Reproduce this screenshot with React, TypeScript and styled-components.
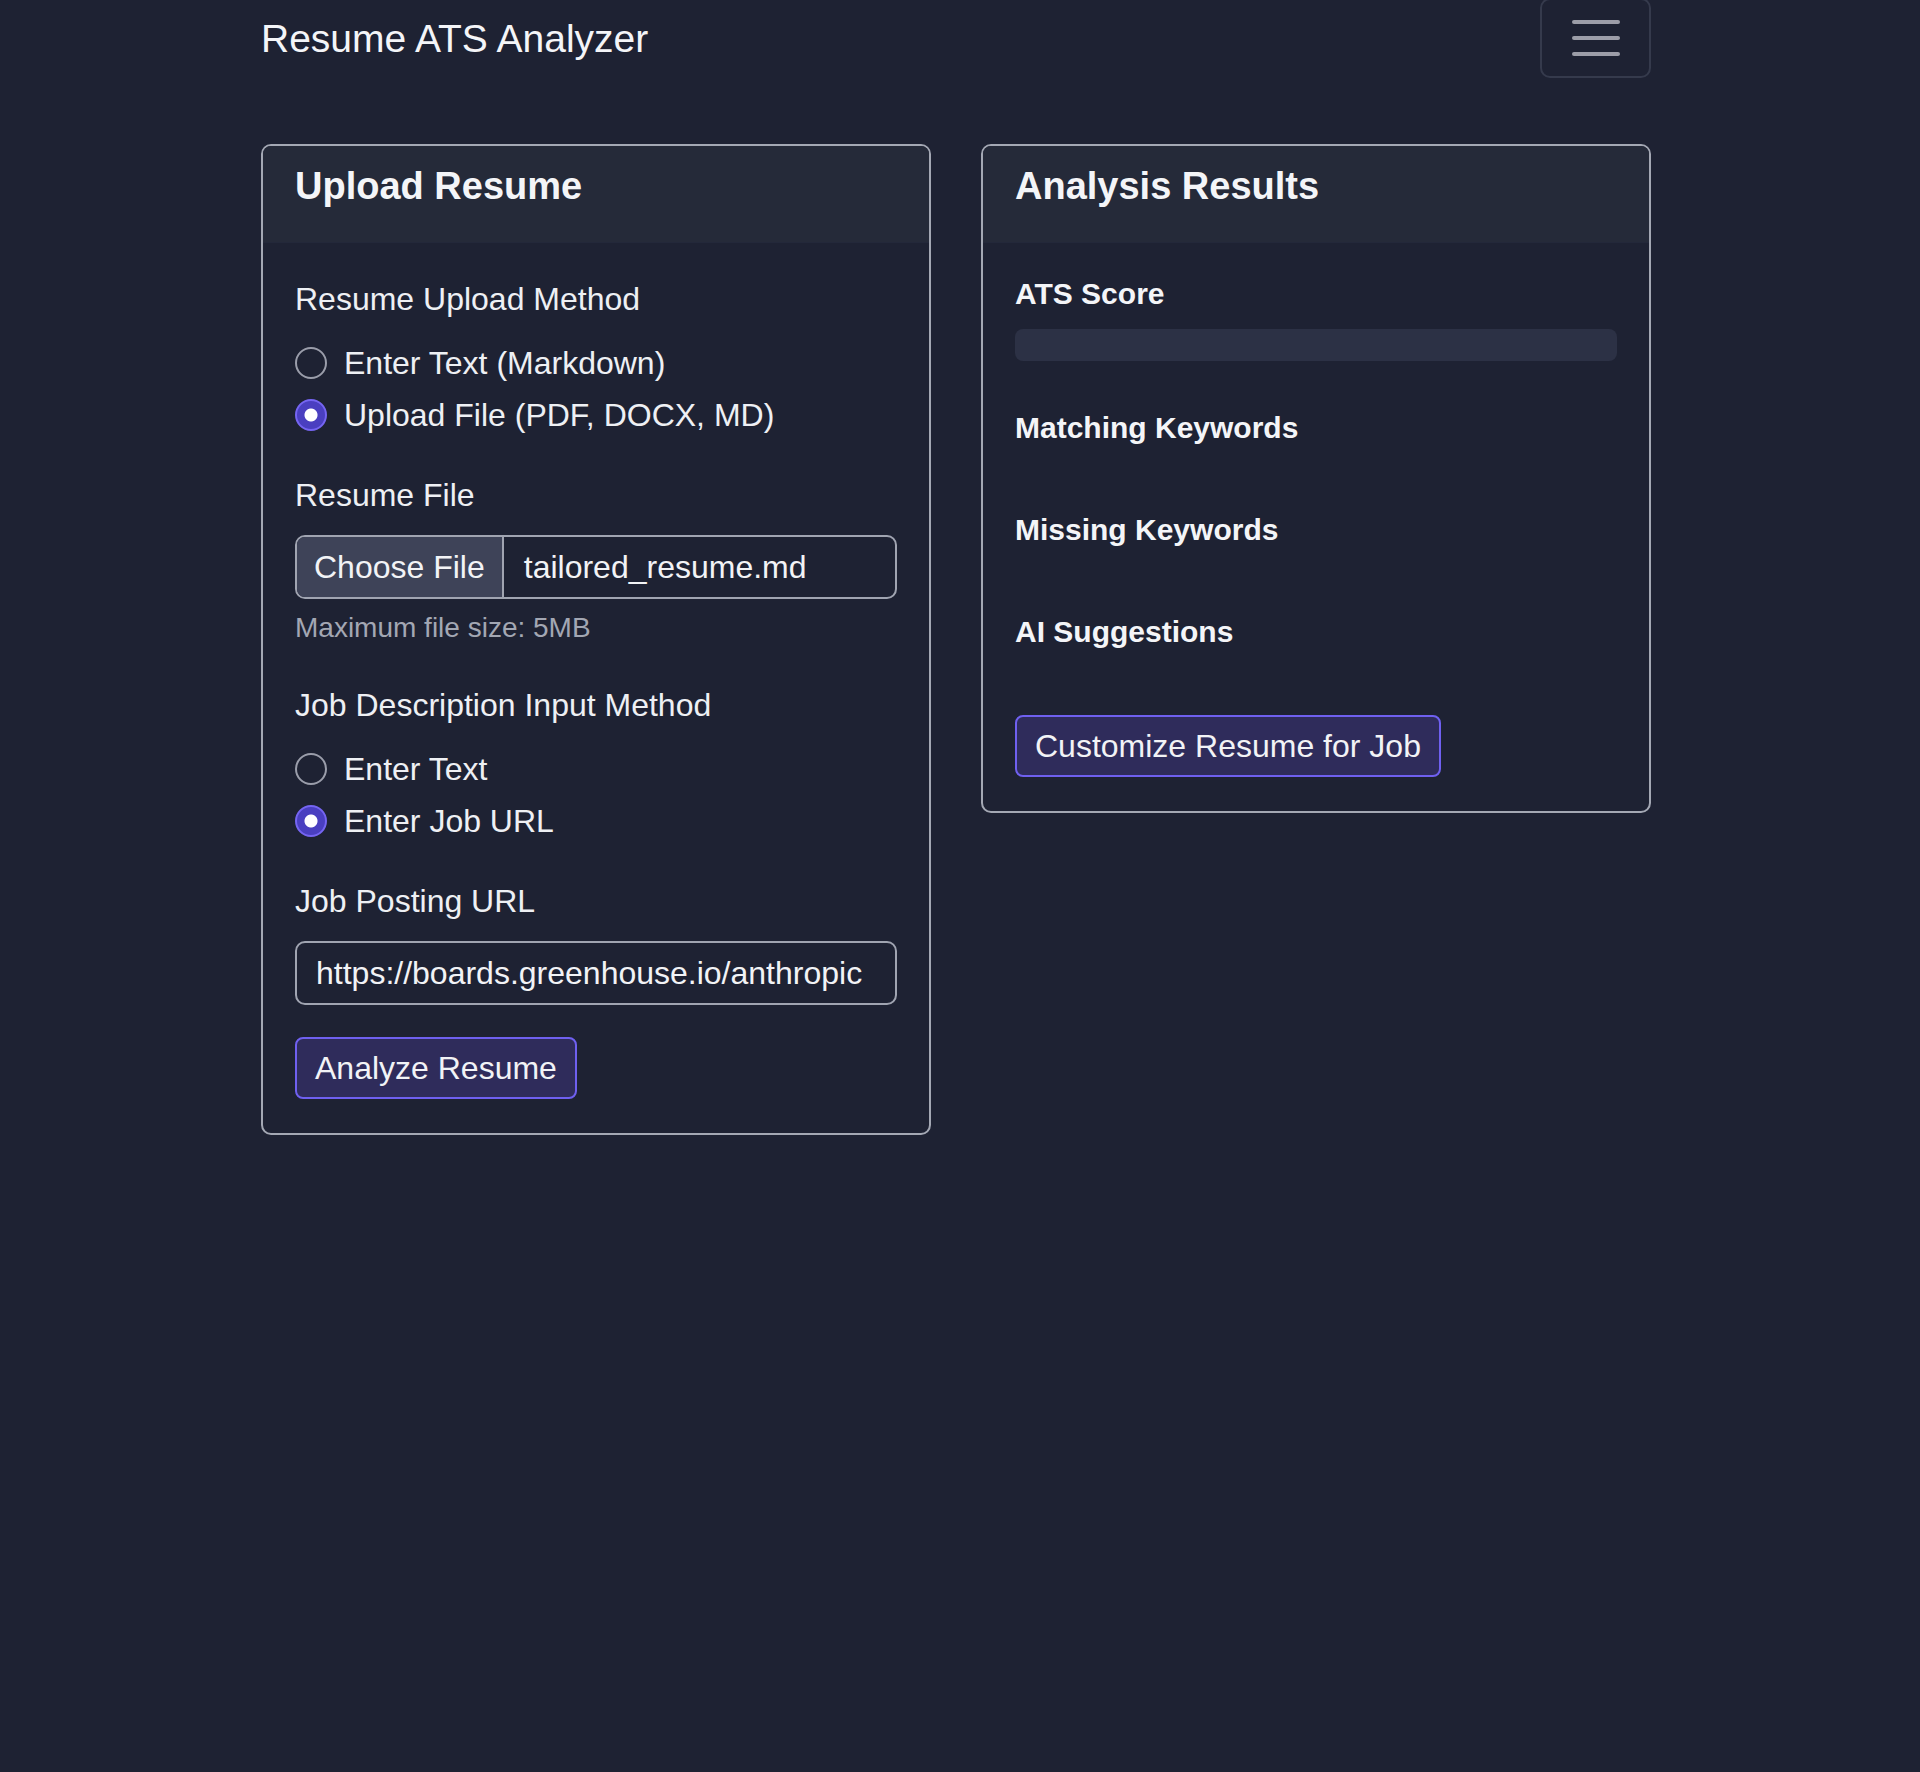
import styled, { createGlobalStyle } from "styled-components";

const GlobalStyle = createGlobalStyle`
  html, body {
    margin: 0;
    padding: 0;
    background: #1e2233;
  }
  body {
    min-height: 1772px;
    padding-right: 8px;
    font-family: "Liberation Sans", Arial, sans-serif;
    color: #eef0f4;
  }
`;

const Container = styled.div`
  width: 1390px;
  margin: 0 auto;
`;

const NavBar = styled.nav`
  display: flex;
  align-items: center;
  justify-content: space-between;
  height: 80px;
  margin-top: -2px;
`;

const Brand = styled.a`
  font-size: 39px;
  line-height: 48px;
  color: #f4f5f8;
  text-decoration: none;
  margin-top: 2px;
`;

const Toggler = styled.button`
  width: 111px;
  height: 80px;
  background: transparent;
  border: 2px solid #353a4c;
  border-radius: 10px;
  display: flex;
  flex-direction: column;
  align-items: center;
  justify-content: center;
  gap: 12px;
  padding: 0;

  span {
    display: block;
    width: 48px;
    height: 4px;
    border-radius: 2px;
    background: #9c9da8;
  }
`;

const Grid = styled.main`
  display: grid;
  grid-template-columns: 670px 670px;
  column-gap: 50px;
  align-items: start;
  margin-top: 66px;
`;

const Card = styled.section`
  border: 2px solid #a4a8b4;
  border-radius: 10px;
  overflow: hidden;
`;

const CardHeader = styled.header`
  background: #252a39;
  padding: 17px 32px 32px;
  border-bottom: 1px solid #23283a;

  h2 {
    margin: 0;
    font-size: 38px;
    line-height: 47px;
    font-weight: 700;
    color: #f4f5f8;
  }
`;

const CardBody = styled.div`
  padding: 32px 32px 34px;
`;

const Group = styled.div`
  margin-bottom: 32px;
`;

const Label = styled.div`
  font-size: 32px;
  line-height: 48px;
  margin-bottom: 16px;
  color: #eef0f4;
`;

const RadioList = styled.div`
  display: flex;
  flex-direction: column;
  gap: 4px;
`;

const RadioRow = styled.label`
  display: flex;
  align-items: center;
  gap: 17px;
  height: 48px;
  font-size: 32px;
  color: #eef0f4;
  white-space: nowrap;
`;

const RadioDot = styled.input`
  appearance: none;
  margin: 0;
  width: 32px;
  height: 32px;
  border-radius: 50%;
  border: 2px solid #9a9daa;
  background: transparent;
  flex-shrink: 0;

  &:checked {
    border-color: #7565f2;
    background: radial-gradient(circle, #ffffff 0 6px, #4a3fc0 7px);
  }
`;

const FileField = styled.div`
  display: flex;
  height: 64px;
  box-sizing: border-box;
  border: 2px solid #a0a4b1;
  border-radius: 10px;
  overflow: hidden;
  font-size: 32px;
  white-space: nowrap;
`;

const FileButton = styled.span`
  display: flex;
  align-items: center;
  padding: 0 17px;
  background: #3e4358;
  border-right: 2px solid #a0a4b1;
  color: #f2f3f6;
  flex-shrink: 0;
`;

const FileName = styled.span`
  display: flex;
  align-items: center;
  padding: 0 20px;
  color: #f2f3f6;
`;

const HelpText = styled.div`
  margin-top: 8px;
  font-size: 28px;
  line-height: 42px;
  color: #a3a7b3;
`;

const TextInput = styled.input`
  display: block;
  width: 100%;
  box-sizing: border-box;
  height: 64px;
  padding: 6px 19px;
  border: 2px solid #a0a4b1;
  border-radius: 10px;
  background: transparent;
  font-family: "Liberation Sans", Arial, sans-serif;
  font-size: 32px;
  color: #f2f3f6;
  outline: none;
`;

const PrimaryButton = styled.button`
  display: inline-block;
  height: 62px;
  padding: 0 18px;
  border: 2px solid #6f60f0;
  border-radius: 8px;
  background: #2f2c5b;
  font-family: "Liberation Sans", Arial, sans-serif;
  font-size: 32px;
  line-height: 48px;
  color: #f2f3f6;
  white-space: nowrap;
`;

const Section = styled.div`
  display: flow-root;
  margin-bottom: 48px;

  h3 {
    margin: 0 0 16px;
    font-size: 30px;
    line-height: 38px;
    font-weight: 700;
    color: #f4f5f8;
  }
`;

const Progress = styled.div`
  height: 32px;
  border-radius: 8px;
  background: #2c3145;
`;

export default function App() {
  return (
    <>
      <GlobalStyle />
      <Container>
        <NavBar>
          <Brand href="#">Resume ATS Analyzer</Brand>
          <Toggler aria-label="Toggle navigation">
            <span />
            <span />
            <span />
          </Toggler>
        </NavBar>

        <Grid>
          <Card>
            <CardHeader>
              <h2>Upload Resume</h2>
            </CardHeader>
            <CardBody>
              <Group>
                <Label>Resume Upload Method</Label>
                <RadioList>
                  <RadioRow>
                    <RadioDot type="radio" name="resumeMethod" readOnly />
                    Enter Text (Markdown)
                  </RadioRow>
                  <RadioRow>
                    <RadioDot type="radio" name="resumeMethod" readOnly checked />
                    Upload File (PDF, DOCX, MD)
                  </RadioRow>
                </RadioList>
              </Group>

              <Group>
                <Label>Resume File</Label>
                <FileField>
                  <FileButton>Choose File</FileButton>
                  <FileName>tailored_resume.md</FileName>
                </FileField>
                <HelpText>Maximum file size: 5MB</HelpText>
              </Group>

              <Group>
                <Label>Job Description Input Method</Label>
                <RadioList>
                  <RadioRow>
                    <RadioDot type="radio" name="jobMethod" readOnly />
                    Enter Text
                  </RadioRow>
                  <RadioRow>
                    <RadioDot type="radio" name="jobMethod" readOnly checked />
                    Enter Job URL
                  </RadioRow>
                </RadioList>
              </Group>

              <Group>
                <Label>Job Posting URL</Label>
                <TextInput type="text" readOnly value="https://boards.greenhouse.io/anthropic" />
              </Group>

              <PrimaryButton>Analyze Resume</PrimaryButton>
            </CardBody>
          </Card>

          <Card>
            <CardHeader>
              <h2>Analysis Results</h2>
            </CardHeader>
            <CardBody>
              <Section>
                <h3>ATS Score</h3>
                <Progress />
              </Section>
              <Section>
                <h3>Matching Keywords</h3>
              </Section>
              <Section>
                <h3>Missing Keywords</h3>
              </Section>
              <Section>
                <h3>AI Suggestions</h3>
              </Section>
              <PrimaryButton>Customize Resume for Job</PrimaryButton>
            </CardBody>
          </Card>
        </Grid>
      </Container>
    </>
  );
}
